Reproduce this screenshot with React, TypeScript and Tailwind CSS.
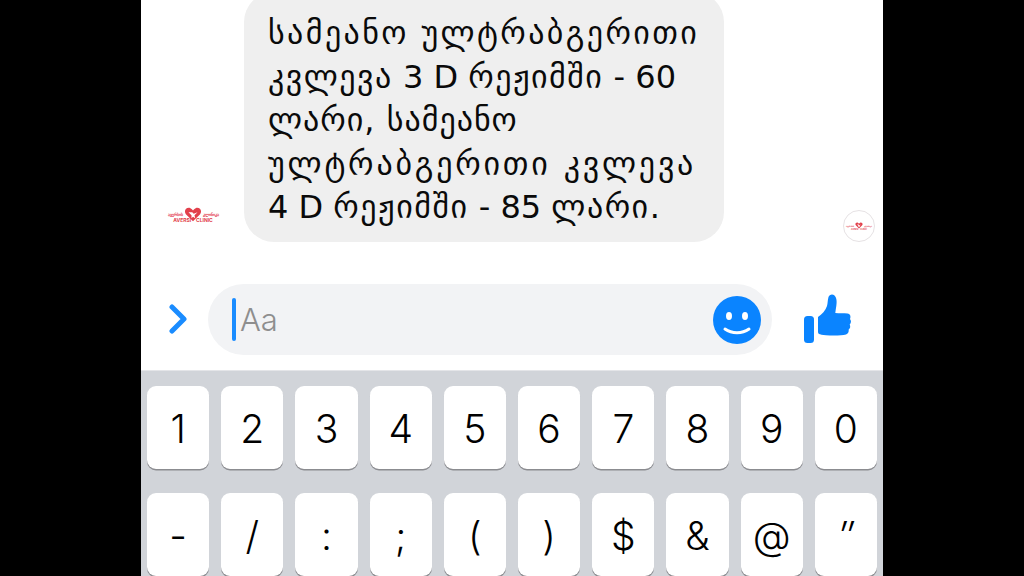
const row1 = ['1', '2', '3', '4', '5', '6', '7', '8', '9', '0']
const row2 = ['-', '/', ':', ';', '(', ')', '$', '&', '@', '″']

const Logo = ({ small }: { small?: boolean }) => (
  <div className={small ? 'flex flex-col items-center w-[28px] text-[#e2404b]' : 'flex flex-col items-center w-[56px] text-[#e2404b]'}>
    <div className="flex items-center justify-center">
      <span className={small ? 'text-[2px] leading-none font-bold' : 'text-[4px] leading-none font-bold'}>ავერსის</span>
      <svg viewBox="0 0 24 20" className={small ? 'w-[8px] h-[7px] mx-px' : 'w-[18px] h-[15px] mx-px'}>
        <path d="M12 19 2.500 9.500C-1 5 3.500-.5 8.500 1.500 10 2.200 11.200 3.200 12 4.500 12.800 3.200 14 2.200 15.500 1.500 20.500-.5 25 5 21.500 9.500Z" fill="currentColor" />
        <path d="M6 7h5l2 2 5-2-4 4 1 4-3-2-2 2 0-4Z" fill="#fff" />
      </svg>
      <span className={small ? 'text-[2px] leading-none font-bold' : 'text-[4px] leading-none font-bold'}>კლინიკა</span>
    </div>
    <div className={small ? 'text-[2px] leading-none -mt-[1px] font-bold' : 'text-[5px] leading-none -mt-[4px] font-bold'}>
      AVERSI&nbsp;&nbsp;&nbsp;&nbsp;CLINIC
    </div>
  </div>
)

const Key = ({ label }: { label: string }) => (
  <div className={`h-[83px] rounded-[9px] bg-white shadow-[0_1.5px_0_#8b8c90] flex items-center justify-center text-[39px] font-light text-black pt-[3px] ${label === '″' ? 'italic' : ''}`}>
    {label}
  </div>
)

export default function App() {
  return (
    <div className="w-[1024px] h-[576px] bg-black overflow-hidden flex justify-center font-['Inter',sans-serif]">
      <div className="w-[742px] h-[576px] flex flex-col bg-white overflow-hidden">
        <div className="h-[242px] flex items-end pl-[24px] pr-[8px]">
          <div className="w-[56px] mb-[19px]">
            <Logo />
          </div>
          <div className="ml-[23px] w-[480px] h-[250px] shrink-0 rounded-[30px] bg-[#efefef] pl-[24px] pt-[20px] text-[32px] leading-[43.500px] text-[#0a0a0a] whitespace-nowrap font-['DejaVu_Sans',sans-serif]">
            <div className="tracking-[2.400px]">სამეანო ულტრაბგერითი</div>
            <div><span className="tracking-[1.500px]">კვლევა</span> 3 D <span className="tracking-[1.500px]">რეჟიმში</span> - 60</div>
            <div className="tracking-[1px]">ლარი, სამეანო</div>
            <div className="tracking-[2.800px]">ულტრაბგერითი კვლევა</div>
            <div>4 D <span className="tracking-[1.500px]">რეჟიმში</span> - 85 <span className="tracking-[1.500px]">ლარი.</span></div>
          </div>
          <div className="ml-auto w-[32px] h-[32px] rounded-full border border-[#e6e2e4] flex items-center justify-center">
            <Logo small />
          </div>
        </div>

        <div className="h-[129px] flex items-start pt-[42px]">
          <svg viewBox="0 0 18 30" className="w-[18px] h-[30px] ml-[28px] mt-[20px] shrink-0">
            <path d="M3 3 15 15 3 27" fill="none" stroke="#1a8cff" strokeWidth="5" strokeLinecap="round" strokeLinejoin="round" />
          </svg>
          <div className="ml-[21px] w-[564px] h-[71px] rounded-full bg-[#f2f3f5] flex items-center pl-[24px] pr-[11px] shrink-0">
            <div className="w-[4px] h-[43px] rounded-full bg-[#1a8cff]" />
            <span className="ml-[4px] pt-[2px] text-[31px] font-light text-[#8e8e8e]">Aa</span>
            <svg viewBox="0 0 48 48" className="ml-auto w-[48px] h-[48px]">
              <circle cx="24" cy="24" r="24" fill="#0a84ff" />
              <ellipse cx="16" cy="20" rx="3" ry="4" fill="#fff" />
              <ellipse cx="32" cy="20" rx="3" ry="4" fill="#fff" />
              <path d="M12 33c7 5 17 5 24 0" fill="none" stroke="#fff" strokeWidth="3" strokeLinecap="round" />
            </svg>
          </div>
          <svg viewBox="0 0 50 50" className="ml-[31px] w-[50px] h-[50px] mt-[9px] shrink-0">
            <rect x="1" y="23" width="10" height="27" rx="3.500" fill="#0a84ff" />
            <path d="M15 24c4-2.500 7.500-6.500 9-11 .8-2.500.5-5.500 1.500-9 .8-2.500 4-3.500 6-1.500 2.300 2.200 2.500 6.500 1.800 10.500-.4 2.500-.8 5-1 7 4 .5 8.500.2 12.200.5 3 .3 3.500 3.500 2.500 5.500 1.500 1.800 1.200 4-.3 5.500 1 2 .5 4-1 5 .3 2.500-.8 4.500-2.700 5-4 1.200-13 1.300-20 .8-3.500-.3-6-.8-7-1.300-.7-.5-1-1.200-1-2.500Z" fill="#0a84ff" />
          </svg>
        </div>

        <div className="flex-1 bg-[#d1d4d9] border-t border-[#e4e5e8] px-[6px] pt-[15px] flex flex-col gap-[24px]">
          <div className="grid grid-cols-10 gap-[12px]">
            {row1.map((k) => <Key key={k} label={k} />)}
          </div>
          <div className="grid grid-cols-10 gap-[12px]">
            {row2.map((k) => <Key key={k} label={k} />)}
          </div>
        </div>
      </div>
    </div>
  )
}
